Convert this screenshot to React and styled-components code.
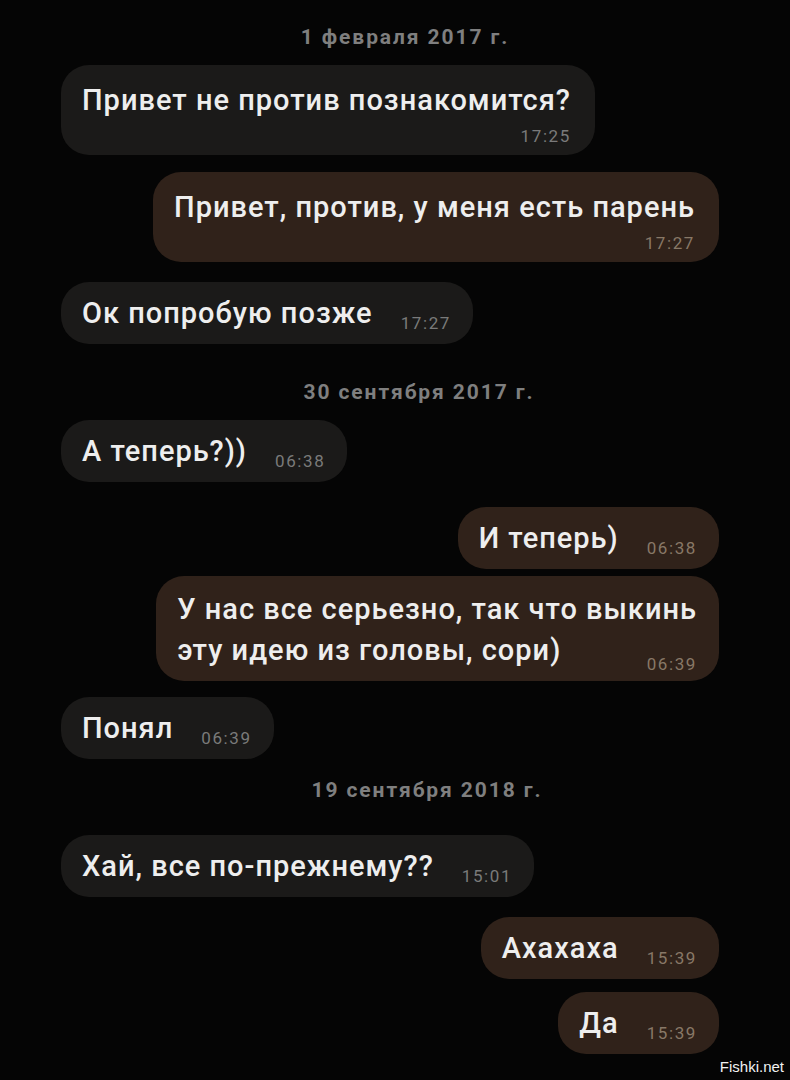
import React from 'react';
import styled, { createGlobalStyle } from 'styled-components';

const GlobalStyle = createGlobalStyle`
  html, body {
    margin: 0;
    padding: 0;
    background: #050505;
  }
  * { box-sizing: border-box; }
`;

const Screen = styled.div`
  position: relative;
  width: 790px;
  height: 1080px;
  overflow: hidden;
  background: #050505;
  font-family: Roboto, "Liberation Sans", sans-serif;
  display: flex;
  flex-direction: column;
  padding: 22px 71px 0 61px;
`;

const DateRow = styled.div`
  display: flex;
  justify-content: center;
  padding-left: ${({ shift }) => shift || 0}px;
  margin-top: ${({ mt }) => mt || 0}px;
  color: #7f7f7f;
  font-size: 21px;
  font-weight: 700;
  line-height: 30px;
  letter-spacing: 1.9px;
`;

const Row = styled.div`
  display: flex;
  justify-content: ${({ out }) => (out ? 'flex-end' : 'flex-start')};
  margin-top: ${({ mt }) => mt || 0}px;
`;

// kind: 'inline' (time at end of last line), 'below' (time on its own line)
const Bubble = styled.div`
  display: flex;
  flex-direction: column;
  padding: ${({ kind, multi }) =>
    kind === 'below' ? '18px 24px 8px 21px' : multi ? '13px 22px 10px 21px' : '14px 22px 14px 21px'};
  border-radius: 28px;
  background: ${({ out }) => (out ? '#30221a' : '#1b1a19')};
  color: #eeeeee;
  font-size: 29px;
  font-weight: 500;
  letter-spacing: 1px;
  line-height: ${({ multi }) => (multi ? 41 : 34)}px;
`;

const Line = styled.div`
  white-space: nowrap;
`;

const LastLine = styled.div`
  display: flex;
  align-items: flex-end;
  justify-content: space-between;
  gap: 28px;
  white-space: nowrap;
`;

const TimeRow = styled.div`
  display: flex;
  justify-content: flex-end;
  margin-top: 8px;
`;

const Time = styled.span`
  font-size: 17px;
  font-weight: 400;
  line-height: 22px;
  margin-bottom: ${({ inline }) => (inline ? -4 : 0)}px;
  color: ${({ out }) => (out ? '#887867' : '#7a7a7a')};
  letter-spacing: 1.6px;
`;

const Watermark = styled.div`
  position: absolute;
  right: 6px;
  bottom: 5px;
  font-family: "Liberation Sans", Arial, sans-serif;
  font-size: 15px;
  color: #f2f2f2;
`;

const ITEMS = [
  { date: '1 февраля 2017 г.', shift: 30 },
  { text: 'Привет не против познакомится?', time: '17:25', kind: 'below', mt: 13 },
  { text: 'Привет, против, у меня есть парень', time: '17:27', out: true, kind: 'below', mt: 17 },
  { text: 'Ок попробую позже', time: '17:27', mt: 20 },
  { date: '30 сентября 2017 г.', shift: 58, mt: 33 },
  { text: 'А теперь?))', time: '06:38', mt: 13 },
  { text: 'И теперь)', time: '06:38', out: true, mt: 25 },
  { text: 'У нас все серьезно, так что выкинь\nэту идею из головы, сори)', time: '06:39', out: true, mt: 7 },
  { text: 'Понял', time: '06:39', mt: 16 },
  { date: '19 сентября 2018 г.', shift: 74, mt: 16 },
  { text: 'Хай, все по-прежнему??', time: '15:01', mt: 30 },
  { text: 'Ахахаха', time: '15:39', out: true, mt: 20 },
  { text: 'Да', time: '15:39', out: true, mt: 13 },
];

const Message = ({ text, time, out, kind = 'inline' }) => {
  const lines = text.split('\n');
  const last = lines.length - 1;
  const below = kind === 'below';
  return (
    <Bubble out={out} kind={kind} multi={lines.length > 1}>
      {lines.map((l, idx) =>
        idx < last || below ? (
          <Line key={idx}>{l}</Line>
        ) : (
          <LastLine key={idx}>
            <span>{l}</span>
            <Time out={out} inline>{time}</Time>
          </LastLine>
        )
      )}
      {below && (
        <TimeRow>
          <Time out={out}>{time}</Time>
        </TimeRow>
      )}
    </Bubble>
  );
};

const App = () => (
  <>
    <GlobalStyle />
    <Screen>
      {ITEMS.map((m, i) =>
        m.date ? (
          <DateRow key={i} mt={m.mt} shift={m.shift}>{m.date}</DateRow>
        ) : (
          <Row key={i} out={m.out} mt={m.mt}>
            <Message {...m} />
          </Row>
        )
      )}
      <Watermark>Fishki.net</Watermark>
    </Screen>
  </>
);

export default App;
